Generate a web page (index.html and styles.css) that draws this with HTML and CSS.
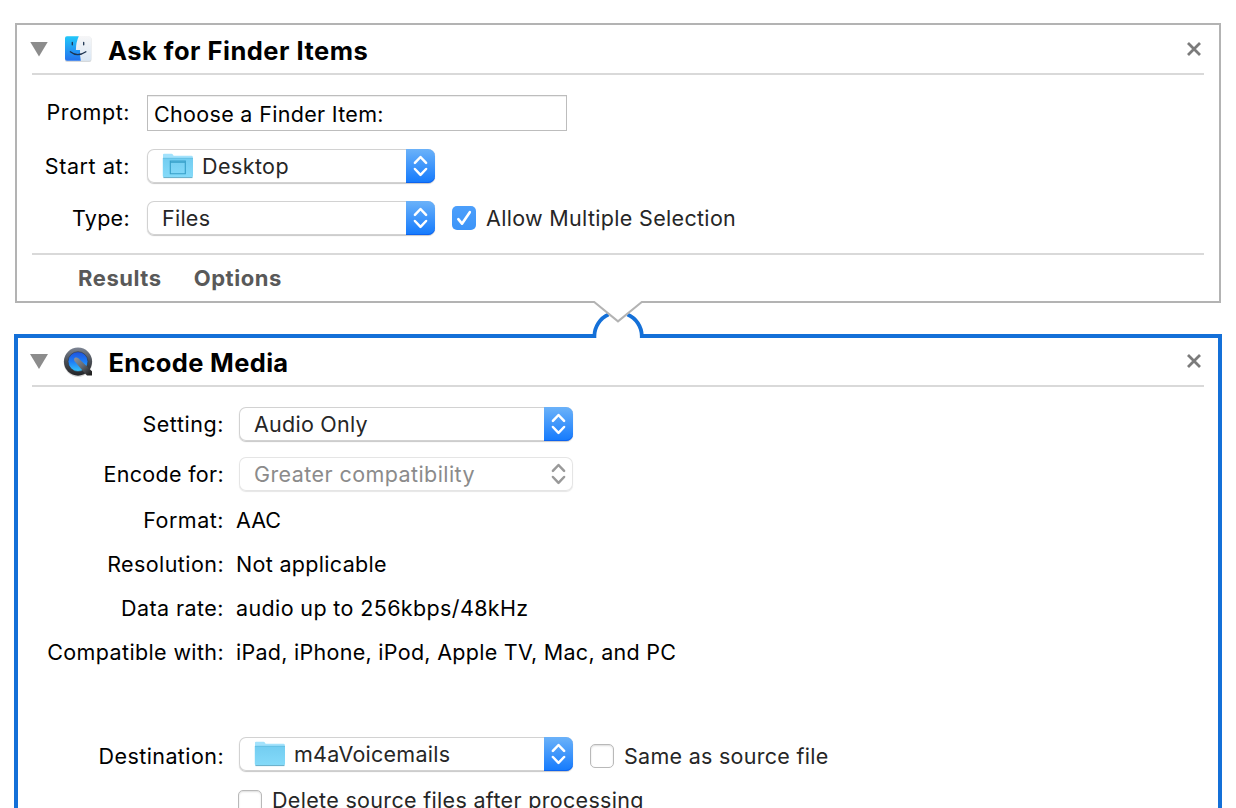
FILE: index.html
```
<!DOCTYPE html>
<html lang="en">
<head>
<meta charset="utf-8">
<title>Workflow</title>
<link rel="stylesheet" href="styles.css">
</head>
<body>
<svg class="defs" width="0" height="0" aria-hidden="true">
  <defs>
    <linearGradient id="folder" x1="0" y1="0" x2="0" y2="1"><stop offset="0" stop-color="#73cdf1"/><stop offset="1" stop-color="#84daf9"/></linearGradient>
    <linearGradient id="finderBlue" x1="0" y1="0" x2="0" y2="1"><stop offset="0" stop-color="#22c8fa"/><stop offset="1" stop-color="#2472ed"/></linearGradient>
    <linearGradient id="finderPale" x1="0" y1="0" x2="0" y2="1"><stop offset="0" stop-color="#f6f6f7"/><stop offset="1" stop-color="#dae7f4"/></linearGradient>
    <linearGradient id="ring" x1="0" y1="0" x2="0" y2="1"><stop offset="0" stop-color="#7d8594"/><stop offset=".5" stop-color="#4a4e55"/><stop offset="1" stop-color="#222326"/></linearGradient>
    <linearGradient id="lens" x1="0" y1="0" x2="0" y2="1"><stop offset="0" stop-color="#1f52dc"/><stop offset=".5" stop-color="#1d7df8"/><stop offset="1" stop-color="#35c5fb"/></linearGradient>
    <linearGradient id="tail" gradientUnits="userSpaceOnUse" x1="13" y1="12" x2="28" y2="28"><stop offset="0" stop-color="#8b919b"/><stop offset=".5" stop-color="#656a72"/><stop offset="1" stop-color="#222222"/></linearGradient>
    <symbol id="arrows" viewBox="0 0 29 34"><path d="M8.9 13.9 14.5 8l5.6 5.9M8.9 20l5.6 5.9 5.6-5.9" fill="none" stroke="currentColor" stroke-width="2.5" stroke-linecap="round" stroke-linejoin="round"/></symbol>
    <symbol id="close" viewBox="0 0 14 14"><path d="M1 1 13 13M13 1 1 13" stroke="#7b7b7b" stroke-width="2.8"/></symbol>
  </defs>
</svg>
<main class="workflow">
  <section class="action">
    <header class="action-head">
      <span class="disclosure"></span>
      <svg class="app-icon" width="32" height="32" viewBox="0 0 32 32">
        <rect x="3" y="3.8" width="26.4" height="25.2" rx="2" fill="#c5c9cc" opacity=".7"/>
        <rect x="3" y="3.2" width="26.2" height="24.6" rx="2" fill="url(#finderPale)"/>
        <path d="M5 3.2H16.8Q14 9 13.9 16.9H18Q17.7 22 18.8 27.8H5a2 2 0 0 1-2-2V5.2a2 2 0 0 1 2-2z" fill="url(#finderBlue)"/>
        <path d="M10.3 9.4v2.4M21.7 9.4v2.4M8.3 18.8Q15.5 24.6 23.9 18.8" fill="none" stroke="#1d3450" stroke-width="1.3" stroke-linecap="round"/>
      </svg>
      <h2 class="title title-finder">Ask for Finder Items</h2>
      <svg class="close" width="14" height="14"><use href="#close"/></svg>
    </header>
    <div class="form form-finder">
      <div class="row row-prompt"><span class="label t-prompt">Prompt:</span><div class="field"><span>Choose a Finder Item:</span></div></div>
      <div class="row"><span class="label t-start">Start at:</span>
        <div class="select select-short">
          <svg class="folder" width="32" height="26" viewBox="0 0 32 26"><path d="M1 23V1.6Q1 .8 2 .8H9.5q1 0 1.5 1l.6 1H29.5q1.3 0 1.3 1.3V23z" fill="#a3e2fc"/><path d="M.8 5H31V23q0 1.3-1.2 1.3H2Q.8 24.3.8 23z" fill="url(#folder)"/><path d="M1 5.3H31" stroke="#61bce0" stroke-width=".8"/><path d="M1.4 24.6H30.5" stroke="#62aac7" stroke-width="1"/><path d="M8.3 8H23.3V20.8H8.3zM8.3 9.2h15" fill="none" stroke="#369fc8" stroke-width="1.1"/></svg>
          <span class="value t-desktop">Desktop</span><span class="knob"><svg width="29" height="34"><use href="#arrows"/></svg></span>
        </div>
      </div>
      <div class="row"><span class="label">Type:</span>
        <div class="select select-short"><span class="value t-files">Files</span><span class="knob"><svg width="29" height="34"><use href="#arrows"/></svg></span></div>
        <span class="check checked"><svg width="24" height="24" viewBox="0 0 24 24"><path d="M6.3 13.2 10 17.7 17.8 6.2" fill="none" stroke="#fff" stroke-width="2.6" stroke-linecap="round" stroke-linejoin="round"/></svg></span>
        <span class="check-label">Allow Multiple Selection</span>
      </div>
    </div>
    <footer class="action-foot"><span>Results</span><span>Options</span></footer>
    <svg class="connector" width="60" height="42" viewBox="588 298 60 42">
      <path d="M596 338V333Q598 318 608 313L618 318 628 313Q639 319 640 333V338z" fill="#fff"/>
      <path d="M594.4 338V336A23.7 23.7 0 0 1 608.5 314.5M627.5 314.5A23.7 23.7 0 0 1 641.8 336V338" fill="none" stroke="#1470d8" stroke-width="3.8"/>
      <path d="M593 300V302H594.2L618 321.4 641.8 302H643V300z" fill="#fff"/>
      <path d="M592 302H594.2L618 321.4 641.8 302H644" fill="none" stroke="#b3b3b3" stroke-width="2"/>
    </svg>
  </section>

  <section class="action selected">
    <header class="action-head">
      <span class="disclosure"></span>
      <svg class="app-icon" width="32" height="32" viewBox="0 0 32 32">
        <circle cx="16" cy="16.6" r="14.2" fill="#999" opacity=".4"/>
        <circle cx="16" cy="15.6" r="14.1" fill="url(#ring)"/>
        <circle cx="16" cy="15.6" r="9.9" fill="url(#lens)" stroke="#303842" stroke-width=".6"/>
        <path d="M12.4 15Q11.4 12.4 13.4 11.6q1.7-.6 3 .6L26 21.6l4 3.7v4.2H25l-3.9-4.2z" fill="url(#tail)"/>
      </svg>
      <h2 class="title">Encode Media</h2>
      <svg class="close" width="14" height="14"><use href="#close"/></svg>
    </header>
    <div class="form form-encode">
      <div class="row row-select"><span class="label t-setting">Setting:</span><div class="select select-long"><span class="value t-audio">Audio Only</span><span class="knob"><svg width="29" height="34"><use href="#arrows"/></svg></span></div></div>
      <div class="row row-select"><span class="label">Encode for:</span><div class="select select-long disabled"><span class="value t-greater">Greater compatibility</span><span class="knob"><svg width="29" height="34"><use href="#arrows"/></svg></span></div></div>
      <div class="row row-text"><span class="label t-format">Format:</span><span class="text t-aac">AAC</span></div>
      <div class="row row-text"><span class="label t-resolution">Resolution:</span><span class="text">Not applicable</span></div>
      <div class="row row-text"><span class="label t-rate">Data rate:</span><span class="text t-kbps">audio up to 256kbps/48kHz</span></div>
      <div class="row row-text"><span class="label t-compat">Compatible with:</span><span class="text t-devices">iPad, iPhone, iPod, Apple TV, Mac, and PC</span></div>
      <div class="row row-dest"><span class="label t-dest">Destination:</span>
        <div class="select select-long">
          <svg class="folder" width="32" height="26" viewBox="0 0 32 26"><path d="M1 23V1.6Q1 .8 2 .8H9.5q1 0 1.5 1l.6 1H29.5q1.3 0 1.3 1.3V23z" fill="#a3e2fc"/><path d="M.8 5H31V23q0 1.3-1.2 1.3H2Q.8 24.3.8 23z" fill="url(#folder)"/><path d="M1 5.3H31" stroke="#61bce0" stroke-width=".8"/><path d="M1.4 24.6H30.5" stroke="#62aac7" stroke-width="1"/></svg>
          <span class="value t-m4a">m4aVoicemails</span><span class="knob"><svg width="29" height="34"><use href="#arrows"/></svg></span>
        </div>
        <span class="check"></span><span class="check-label t-same">Same as source file</span>
      </div>
      <div class="row row-delete"><span class="check"></span><span class="check-label">Delete source files after processing</span></div>
    </div>
  </section>
</main>
</body>
</html>
```
FILE: styles.css
```
* { box-sizing: border-box; }
html, body { height: 100%; }
body {
  margin: 0;
  overflow: hidden;
  background: #fff;
  color: #000;
  font: 21.5px/36px Inter, "Liberation Sans", sans-serif;
  letter-spacing: .32px;
  white-space: nowrap;
}
.defs { position: absolute; }
svg { display: block; flex: none; }
.workflow { height: 808px; padding: 23px 14px 0; overflow: hidden; }

.action {
  position: relative;
  height: 280px;
  margin: 0 1px;
  border: 2px solid #b3b3b3;
}
.action.selected {
  height: 520px;
  margin: 31px 0 0;
  border: 4px solid #1470d8;
}
.action-head {
  display: flex;
  align-items: center;
  height: 50px;
  margin: 0 15px;
  border-bottom: 2px solid #d9d9d9;
}
.selected .action-head { height: 49px; margin: 0 14px; }
.disclosure {
  width: 18px;
  height: 15px;
  margin: 0 14px 0 -2px;
  background: #8c8c8c;
  clip-path: polygon(0 0, 100% 0, 50% 100%);
}
.app-icon { margin-right: 14px; }
.title { margin: 4px 0 0; font-size: 25.5px; line-height: 36px; font-weight: 700; }
.title-finder { letter-spacing: .5px; }
.selected .title { margin: 3px 0 0 .5px; letter-spacing: .33px; }
.close { margin: 0 3px 0 auto; }
.selected .close { margin-bottom: 2px; }

.row { display: flex; align-items: center; height: 36px; }
.label { flex: none; text-align: right; }
.form-finder { padding: 20px 0 0; }
.form-finder .label { width: 113px; margin-right: 17px; }
.form-finder .row { height: 34px; margin-bottom: 18px; }
.form-finder .row-prompt { height: 36px; }
.row-prompt .label { margin-top: -2px; }
.field {
  width: 420px;
  height: 36px;
  padding: 1px 0 0 6px;
  border: 1px solid #bdbdbd;
  line-height: 34px;
  box-shadow: inset 0 1px 0 #eee;
}

.select {
  display: flex;
  flex: none;
  align-items: center;
  height: 34px;
  padding-left: 15px;
  border-radius: 7px;
  background: #fff;
  box-shadow: inset 0 0 0 1px #d2d2d2, 0 1px 1px rgba(0, 0, 0, .22);
  color: #262626;
}
.select-short { width: 288px; }
.select-long { width: 334px; }
.folder { margin-right: 8px; }
.knob {
  width: 29px;
  height: 34px;
  margin-left: auto;
  border-radius: 0 7px 7px 0;
  background: linear-gradient(#6bb2f9, #147afd);
  box-shadow: inset 0 -1px 0 #0d63ee;
  color: #fff;
}
.disabled { color: #8b8b8b; box-shadow: inset 0 0 0 1px #e5e5e5, 0 1px 1px rgba(0, 0, 0, .1); }
.disabled .knob { background: none; box-shadow: none; color: #999; }

.check {
  flex: none;
  width: 24px;
  height: 24px;
  margin: 0 10px 0 17px;
  border: 1px solid #b9b9b9;
  border-radius: 5px;
  background: #fff;
  box-shadow: inset 0 1px 2px rgba(0, 0, 0, .14);
}
.check.checked { border: 0; background: linear-gradient(#4c9ffb, #3c94f8); box-shadow: none; }
.check-label { color: #262626; }

.action-foot {
  display: flex;
  height: 48px;
  margin: 0 15px;
  padding: 5px 0 0 46px;
  gap: 32px;
  border-top: 2px solid #d9d9d9;
  color: #595959;
  font-size: 22px;
  font-weight: 650;
  letter-spacing: .55px;
}
.connector { position: absolute; left: 571px; top: 273px; z-index: 2; }

.form-encode { padding: 20px 0 0; }
.form-encode .label { width: 206px; }
.form-encode .select { margin-left: 15px; }
.row-select { height: 34px; margin-bottom: 16px; }
.row-text { height: 44px; }
.row-text .text { margin-left: 12px; }
.form-encode .row-select + .row-text { margin-top: -9px; }
.row-dest { height: 34px; margin-top: 63px; }
.row-dest .label, .row-dest .check, .row-dest .check-label { margin-top: 4px; }
.row-delete { height: 34px; margin-top: 13px; padding-left: 220px; }
.row-delete .check { margin: 2px 10px 0 0; }
.row-delete .check-label { margin-top: -2px; }

.t-prompt, .t-setting { letter-spacing: .55px; }
.t-start { letter-spacing: .6px; }
.t-desktop, .t-resolution, .t-dest, .t-greater { letter-spacing: .42px; }
.t-format { letter-spacing: .5px; }
.t-rate { letter-spacing: .45px; }
.t-kbps, .t-compat { letter-spacing: .37px; }
.t-files, .t-audio, .t-m4a { letter-spacing: .25px; }
.t-devices, .t-same { letter-spacing: .28px; }
.t-aac { letter-spacing: 0; }
```
